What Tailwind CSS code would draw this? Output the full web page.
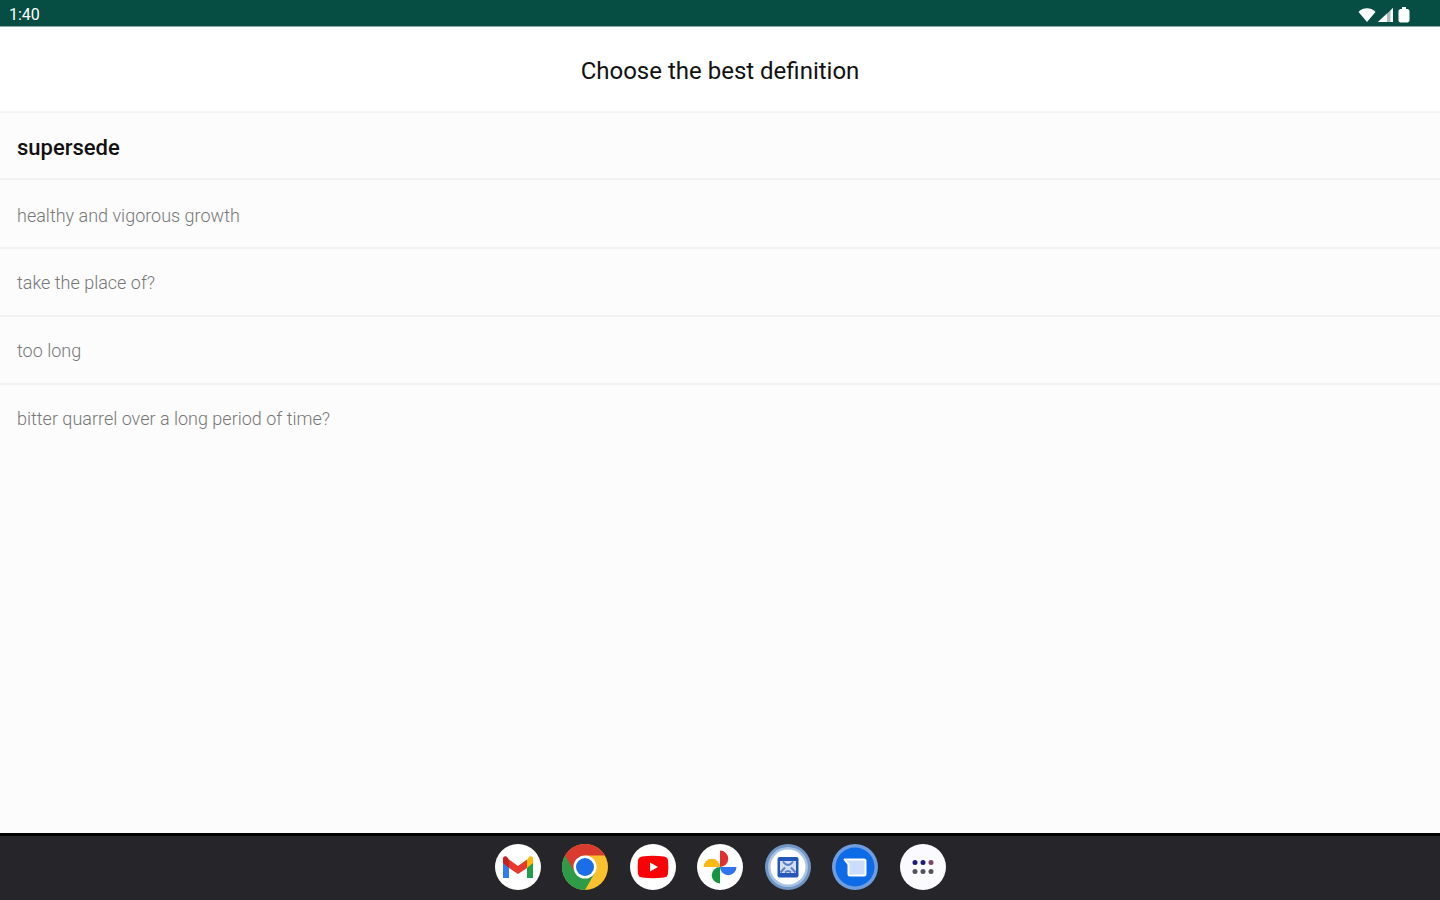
<!DOCTYPE html>
<html lang="en">
<head>
  <meta charset="UTF-8">
  <meta name="viewport" content="width=device-width, initial-scale=1.0">
  <title>Choose the best definition</title>
  <script src="https://cdn.jsdelivr.net/npm/@tailwindcss/browser@4"></script>
</head>
<body class="bg-[#fcfcfc] font-['Roboto',sans-serif]">
  <div class="flex flex-col min-h-screen">
    <!-- Status bar -->
    <div class="flex items-center justify-between h-[27px] pl-[9px] pr-7 pt-[3px] bg-[#064d43] border-b border-[#8aa9a4] text-white">
      <span class="text-[16px] leading-5">1:40</span>
      <div class="flex items-center gap-0.5">
        <svg class="w-[18px] h-4" viewBox="0 0 18 16" fill="currentColor"><path d="M9 15 .5 5C3 2.200 6 1.200 9 1.200s6 1 8.500 3.800z"/></svg>
        <svg class="w-4 h-4" viewBox="0 0 16 16" fill="currentColor"><path d="M0 15 15 1v14z" opacity=".65"/><path d="M0 15 9 6.500V15zM12.500 3.500 15 1v14h-2.500z"/></svg>
        <svg class="w-3 h-4 ml-0.5 mr-0.5" viewBox="0 0 12 16" fill="currentColor"><path d="M4 0h4v2h2l1.500 1.500V14L10 15.500H2L.5 14V3.500L2 2h2z"/></svg>
      </div>
    </div>

    <!-- Question -->
    <header class="flex items-center justify-center h-[86px] pt-1 bg-white border-b-2 border-[#f5f5f5]">
      <h1 class="text-[24px] leading-8 text-[#111]">Choose the best definition</h1>
    </header>

    <!-- Word and answers -->
    <main class="flex-1">
      <h2 class="flex items-center h-[67px] pt-1 px-[17px] border-b-2 border-[#f2f2f2] text-[22px] leading-8 font-medium text-[#111]">supersede</h2>
      <button type="button" class="flex items-center w-full h-[69px] pt-1 px-[17px] border-b-2 border-[#f2f2f2] text-[18px] leading-6 font-light text-[#777]">healthy and vigorous growth</button>
      <button type="button" class="flex items-center w-full h-[68px] pt-0.5 px-[17px] border-b-2 border-[#f2f2f2] text-[18px] leading-6 font-light text-[#777]">take the place of?</button>
      <button type="button" class="flex items-center w-full h-[68px] pt-0.5 px-[17px] border-b-2 border-[#f2f2f2] text-[18px] leading-6 font-light text-[#777]">too long</button>
      <button type="button" class="flex items-center w-full h-[68px] px-[17px] text-[18px] leading-6 font-light text-[#777]">bitter quarrel over a long period of time?</button>
    </main>

    <!-- Dock -->
    <nav class="flex items-center justify-center h-[67px] pb-0.5 bg-[#26262a] border-t-3 border-black">
      <div class="flex justify-between w-[451px]">
        <a href="#" aria-label="Gmail">
          <svg class="w-[46px] h-[46px]" viewBox="0 0 46 46">
            <circle cx="23" cy="23" r="23" fill="#fff"/>
            <path d="M8 15v19h6V19z" fill="#2f7df0"/>
            <path d="M38 15v19h-6V19z" fill="#1fa04a"/>
            <path d="M32 15.500 34.500 12.500Q38 11.500 38 15v4l-6 5z" fill="#fbbc04"/>
            <path d="M14 15.500 23 22l9-6.500v8.500L23 30l-9-6z" fill="#e8382d"/>
            <path d="M8 15q0-3.500 3.500-2.500L14 15.500V24L8 19z" fill="#c5221f"/>
          </svg>
        </a>
        <a href="#" aria-label="Chrome">
          <svg class="w-[46px] h-[46px]" viewBox="0 0 46 46">
            <circle cx="23" cy="23" r="23" fill="#fbc02d"/>
            <path d="M23 23 3.100 11.500A23 23 0 0 0 23 46l10-17.500z" fill="#2d9b48"/>
            <path d="M3.100 11.500A23 23 0 0 1 42.900 11.500H23L13 28.500z" fill="#db3a2f"/>
            <circle cx="23" cy="23" r="11.500" fill="#fff"/>
            <circle cx="23" cy="23" r="9" fill="#1a6fe8"/>
          </svg>
        </a>
        <a href="#" aria-label="YouTube">
          <svg class="w-[46px] h-[46px]" viewBox="0 0 46 46">
            <circle cx="23" cy="23" r="23" fill="#fff"/>
            <path d="M12 12.500q11-1.500 22 0 3.500.5 4 4 .8 6.500 0 13-.5 3.500-4 4-11 1.500-22 0-3.500-.5-4-4-.8-6.500 0-13 .5-3.500 4-4z" fill="#fb0007"/>
            <path d="M20 18.500v9l8-4.500z" fill="#fff"/>
          </svg>
        </a>
        <a href="#" aria-label="Photos">
          <svg class="w-[46px] h-[46px]" viewBox="0 0 46 46">
            <circle cx="23" cy="23" r="23" fill="#fff"/>
            <path d="M23 6.500a8.250 8.250 0 0 1 0 16.500z" fill="#e02f2f"/>
            <path d="M39.500 23a8.250 8.250 0 0 1-16.500 0z" fill="#2f73ee"/>
            <path d="M23 39.500A8.250 8.250 0 0 1 23 23z" fill="#14963f"/>
            <path d="M6.500 23A8.250 8.250 0 0 1 23 23z" fill="#fbb917"/>
          </svg>
        </a>
        <a href="#" aria-label="Vocabulary">
          <svg class="w-[46px] h-[46px]" viewBox="0 0 46 46">
            <circle cx="23" cy="23" r="23" fill="#7196c6"/>
            <circle cx="23" cy="23" r="20" fill="#a9c3e4"/>
            <circle cx="23" cy="23" r="17.500" fill="#fff"/>
            <rect x="12.500" y="13" width="21" height="20.500" rx="2" fill="#2358b8"/>
            <path d="M15 17h16v12H15z" fill="#d3def2"/>
            <path d="M18 17.500q5 7 10 0M15.500 28.500l4.500-5M30.500 28.500l-4.500-5M20 28.500q3-3 6 0" fill="none" stroke="#5b80c9" stroke-width="2"/>
          </svg>
        </a>
        <a href="#" aria-label="Messages">
          <svg class="w-[46px] h-[46px]" viewBox="0 0 46 46">
            <circle cx="23" cy="23" r="23" fill="#6f9de0"/>
            <circle cx="23" cy="23" r="19.500" fill="#0d6be8"/>
            <path d="M12.500 15.500H32q1.500 0 1.500 1.500v13q0 1.500-1.500 1.500H18q-1.500 0-1.500-1.500V20.500z" fill="#ccdcfb" stroke="#fff" stroke-width="2" stroke-linejoin="round"/>
          </svg>
        </a>
        <a href="#" aria-label="All apps">
          <svg class="w-[46px] h-[46px]" viewBox="0 0 46 46">
            <circle cx="23" cy="23" r="23" fill="#fbfaff"/>
            <g fill="#1d1a80"><circle cx="15" cy="18.500" r="2.500"/><circle cx="23" cy="18.500" r="2.500"/></g>
            <circle cx="31" cy="18.500" r="2.500" fill="#7c4568"/>
            <g fill="#54545f"><circle cx="15" cy="27.500" r="2.500"/><circle cx="23" cy="27.500" r="2.500"/><circle cx="31" cy="27.500" r="2.500"/></g>
          </svg>
        </a>
      </div>
    </nav>
  </div>
</body>
</html>
